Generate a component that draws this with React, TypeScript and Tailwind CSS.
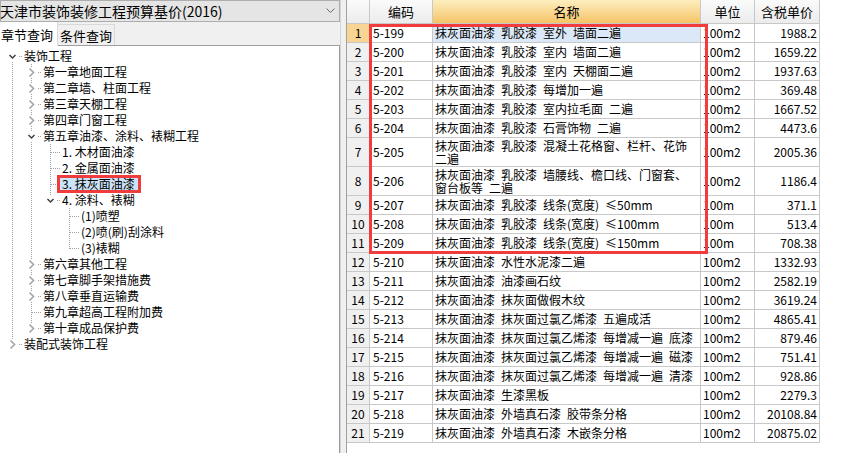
import React from 'react';

type TNode = { label: string; children?: TNode[]; collapsed?: boolean; selected?: boolean };

const tree: TNode[] = [
  {
    label: '装饰工程',
    children: [
      { label: '第一章地面工程', collapsed: true },
      { label: '第二章墙、柱面工程', collapsed: true },
      { label: '第三章天棚工程', collapsed: true },
      { label: '第四章门窗工程', collapsed: true },
      {
        label: '第五章油漆、涂料、裱糊工程',
        children: [
          { label: '1. 木材面油漆' },
          { label: '2. 金属面油漆' },
          { label: '3. 抹灰面油漆', selected: true },
          {
            label: '4. 涂料、裱糊',
            children: [{ label: '(1)喷塑' }, { label: '(2)喷(刷)刮涂料' }, { label: '(3)裱糊' }],
          },
        ],
      },
      { label: '第六章其他工程', collapsed: true },
      { label: '第七章脚手架措施费', collapsed: true },
      { label: '第八章垂直运输费', collapsed: true },
      { label: '第九章超高工程附加费' },
      { label: '第十章成品保护费', collapsed: true },
    ],
  },
  { label: '装配式装饰工程', collapsed: true },
];

type Flat = {
  node: TNode;
  depth: number;
  guides: boolean[];
  hasNext: boolean;
  first: boolean;
};

function flatten(nodes: TNode[], depth: number, guides: boolean[], out: Flat[]) {
  nodes.forEach((n, i) => {
    const hasNext = i < nodes.length - 1;
    out.push({ node: n, depth, guides, hasNext, first: depth === 0 && i === 0 });
    if (n.children) flatten(n.children, depth + 1, [...guides, hasNext], out);
  });
  return out;
}

const flat = flatten(tree, 0, [], []);
const DOT = '#a0a0a0';

function GuideCell({ on }: { on: boolean }) {
  return (
    <svg width="19" height="16" className="block shrink-0">
      {on && <line x1="9.5" y1="0" x2="9.5" y2="16" stroke={DOT} strokeDasharray="1 1" />}
    </svg>
  );
}

function OwnCell({ f }: { f: Flat }) {
  const chev = !!f.node.children || !!f.node.collapsed;
  const expanded = !!f.node.children;
  return (
    <svg width="19" height="16" className="block shrink-0">
      {chev ? (
        <>
          {!f.first && <line x1="9.5" y1="0" x2="9.5" y2="3" stroke={DOT} strokeDasharray="1 1" />}
          {f.hasNext && <line x1="9.5" y1="14" x2="9.5" y2="16" stroke={DOT} strokeDasharray="1 1" />}
          <line x1="16" y1="8.5" x2="19" y2="8.5" stroke={DOT} strokeDasharray="1 1" />
          {expanded ? (
            <polyline points="6.5,7 9.5,10 12.5,7" fill="none" stroke="#404040" strokeWidth="1.5" />
          ) : (
            <polyline points="7.5,4.5 11.5,8.5 7.5,12.5" fill="none" stroke="#a8a8a8" strokeWidth="1.7" />
          )}
        </>
      ) : (
        <>
          <line x1="9.5" y1="0" x2="9.5" y2={f.hasNext ? 16 : 9} stroke={DOT} strokeDasharray="1 1" />
          <line x1="10" y1="8.5" x2="19" y2="8.5" stroke={DOT} strokeDasharray="1 1" />
        </>
      )}
    </svg>
  );
}

type Row = { code: string; name: string | string[]; unit: string; price: string };

const rows: Row[] = [
  { code: '5-199', name: '抹灰面油漆 乳胶漆 室外 墙面二遍', unit: '100m2', price: '1988.2' },
  { code: '5-200', name: '抹灰面油漆 乳胶漆 室内 墙面二遍', unit: '100m2', price: '1659.22' },
  { code: '5-201', name: '抹灰面油漆 乳胶漆 室内 天棚面二遍', unit: '100m2', price: '1937.63' },
  { code: '5-202', name: '抹灰面油漆 乳胶漆 每增加一遍', unit: '100m2', price: '369.48' },
  { code: '5-203', name: '抹灰面油漆 乳胶漆 室内拉毛面 二遍', unit: '100m2', price: '1667.52' },
  { code: '5-204', name: '抹灰面油漆 乳胶漆 石膏饰物 二遍', unit: '100m2', price: '4473.6' },
  { code: '5-205', name: ['抹灰面油漆 乳胶漆 混凝土花格窗、栏杆、花饰', '二遍'], unit: '100m2', price: '2005.36' },
  { code: '5-206', name: ['抹灰面油漆 乳胶漆 墙腰线、檐口线、门窗套、', '窗台板等 二遍'], unit: '100m2', price: '1186.4' },
  { code: '5-207', name: '抹灰面油漆 乳胶漆 线条(宽度) ≤50mm', unit: '100m', price: '371.1' },
  { code: '5-208', name: '抹灰面油漆 乳胶漆 线条(宽度) ≤100mm', unit: '100m', price: '513.4' },
  { code: '5-209', name: '抹灰面油漆 乳胶漆 线条(宽度) ≤150mm', unit: '100m', price: '708.38' },
  { code: '5-210', name: '抹灰面油漆 水性水泥漆二遍', unit: '100m2', price: '1332.93' },
  { code: '5-211', name: '抹灰面油漆 油漆画石纹', unit: '100m2', price: '2582.19' },
  { code: '5-212', name: '抹灰面油漆 抹灰面做假木纹', unit: '100m2', price: '3619.24' },
  { code: '5-213', name: '抹灰面油漆 抹灰面过氯乙烯漆 五遍成活', unit: '100m2', price: '4865.41' },
  { code: '5-214', name: '抹灰面油漆 抹灰面过氯乙烯漆 每增减一遍 底漆', unit: '100m2', price: '879.46' },
  { code: '5-215', name: '抹灰面油漆 抹灰面过氯乙烯漆 每增减一遍 磁漆', unit: '100m2', price: '751.41' },
  { code: '5-216', name: '抹灰面油漆 抹灰面过氯乙烯漆 每增减一遍 清漆', unit: '100m2', price: '928.86' },
  { code: '5-217', name: '抹灰面油漆 生漆黑板', unit: '100m2', price: '2279.3' },
  { code: '5-218', name: '抹灰面油漆 外墙真石漆 胶带条分格', unit: '100m2', price: '20108.84' },
  { code: '5-219', name: '抹灰面油漆 外墙真石漆 木嵌条分格', unit: '100m2', price: '20875.02' },
];

const sp = (s: string) => s.replace(/ /g, '\u2002');

export default function App() {
  return (
    <div className="w-[841px] h-[453px] flex bg-[#f0f0f0] overflow-hidden text-black font-['Noto_Sans_CJK_SC',sans-serif]">
      {/* Left panel */}
      <div className="w-[340px] flex flex-col shrink-0">
        <div className="h-[22px] flex items-center justify-between border border-[#adadad] bg-[#e5e5e5] pr-[4px]">
          <span className="text-[14px] leading-none whitespace-nowrap -ml-px">天津市装饰装修工程预算基价(2016)</span>
          <svg width="9" height="6" className="block">
            <polyline points="0.5,0.5 4.5,4.5 8.5,0.5" fill="none" stroke="#6a6a6a" strokeWidth="1" />
          </svg>
        </div>
        <div className="h-[24px] flex items-end border-b border-[#a0a0a0] relative">
          <div className="h-[24px] w-[58px] bg-white border-r border-[#d9d9d9] flex items-center text-[13px] leading-none -mb-px relative z-10 pl-px">
            章节查询
          </div>
          <div className="h-[21px] w-[57px] bg-[#f0f0f0] border-r border-t border-[#d9d9d9] flex items-center justify-center text-[13px] leading-none">
            条件查询
          </div>
        </div>
        <div className="flex-1 bg-white border-r border-[#9a9a9a] pt-[2px]">
          {flat.map((f, idx) => (
            <div key={idx} className="h-[16px] flex items-center pl-[3px]">
              {f.guides.map((g, gi) => (
                <GuideCell key={gi} on={g} />
              ))}
              <OwnCell f={f} />
              {f.node.selected ? (
                <span className="inline-block h-[12px] leading-[12px] text-[12px] whitespace-nowrap bg-[#cce4f7] pl-[2px] pr-[3px] outline-[3px] outline-solid outline-[#f03c3c]">
                  {f.node.label}
                </span>
              ) : (
                <span className="ml-[2px] text-[12px] leading-[16px] whitespace-nowrap">{f.node.label}</span>
              )}
            </div>
          ))}
        </div>
      </div>
      {/* splitter */}
      <div className="w-[6px] shrink-0 bg-[#f0f0f0] border-l border-[#d4d4d4]" />
      {/* Right panel */}
      <div className="relative flex-1 bg-white border-l border-[#a0a0a0]">
        <div className="grid grid-cols-[23px_63px_268px_54px_65px] w-[473px] text-[12px]">
          <div className="h-[24px] bg-linear-to-b from-[#fafafa] to-[#ececec] border-r border-b border-[#c8c8c8]" />
          <div className="h-[24px] bg-linear-to-b from-[#fafafa] to-[#ececec] border-r border-b border-[#c8c8c8] flex items-center justify-center text-[13px]">编码</div>
          <div className="h-[24px] bg-linear-to-b from-[#fdeebf] to-[#f5c465] border-r border-b border-[#c8c8c8] flex items-center justify-center text-[13px]">名称</div>
          <div className="h-[24px] bg-linear-to-b from-[#fafafa] to-[#ececec] border-r border-b border-[#c8c8c8] flex items-center justify-center text-[13px]">单位</div>
          <div className="h-[24px] bg-linear-to-b from-[#fafafa] to-[#ececec] border-r border-b border-[#c8c8c8] flex items-center justify-center text-[13px]">含税单价</div>
          {rows.map((r, i) => {
            const tall = Array.isArray(r.name);
            const h = tall ? 'h-[29px]' : 'h-[19px]';
            return (
              <React.Fragment key={i}>
                <div className={`${h} border-r border-b border-[#c8c8c8] flex items-center justify-center ${i === 0 ? 'bg-[#f9d594]' : 'bg-[#f0f0f0]'}`}>
                  {i + 1}
                </div>
                <div className={`${h} border-r border-b border-[#c8c8c8] flex items-center pl-[3px] whitespace-nowrap`}>{r.code}</div>
                <div className={`${h} border-r border-b border-[#c8c8c8] flex items-center pl-[2px] whitespace-nowrap overflow-hidden ${i === 0 ? 'bg-[#dbe8f7]' : ''}`}>
                  {tall ? (
                    <div className="leading-[13px]">
                      {(r.name as string[]).map((l, li) => (
                        <div key={li}>{sp(l)}</div>
                      ))}
                    </div>
                  ) : (
                    <span>{sp(r.name as string)}</span>
                  )}
                </div>
                <div className={`${h} border-r border-b border-[#c8c8c8] flex items-center pl-[2px]`}>{r.unit}</div>
                <div className={`${h} border-r border-b border-[#c8c8c8] flex items-center justify-end pr-[2px]`}>{r.price}</div>
              </React.Fragment>
            );
          })}
        </div>
        <div className="absolute left-[22px] top-[24px] w-[339px] h-[230px] border-[3px] border-[#f03c3c] pointer-events-none" />
      </div>
    </div>
  );
}
